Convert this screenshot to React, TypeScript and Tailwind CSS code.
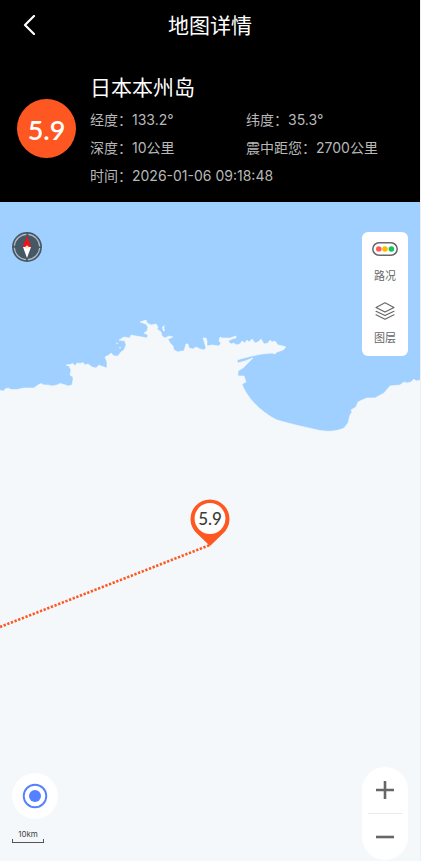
import { useState } from 'react';

const quake = {
  magnitude: '5.9',
  place: '日本本州岛',
  details: [
    { label: '经度', value: '133.2°' },
    { label: '纬度', value: '35.3°' },
    { label: '深度', value: '10公里' },
    { label: '震中距您', value: '2700公里' },
    { label: '时间', value: '2026-01-06 09:18:48', wide: true },
  ],
};

const coastline =
  'M0 390.5 4 391 5 389 8 388 11 389.5 17 389.5 24 388 34 388 38 385 41 383.5 44 385 48 385 52 386 57 385 60 383.5 64 384.5 68 386 72 385 73 380 73 377 70 375 71 370 69 366 66 365 70 364.5 73 363.5 75 366 77 363 80 363.5 83 362.5 85 365 88 364 92 367 96 368 99 365 101 366 104 367 107 368 107 362 105 357 109 355 111 353 114 356 118 356 121 352 124 350 126 345 125 341 119 340 124 337 130 338 131 335 136 336 142 337 147 338 148 335 144 333 147 331 148 327 146 324 140 322 146 320 ' +
  '147 323 151 325 156 324 158 327 157 329 161 332 162 336 165 338 169 336 173 337 168 339 170 343 173 346 174 350 178 352 181 351 184 351 186 344 188 344 189 348 193 349 196 347 200 349 204 350 206 348 204 341 203 338 206 338 207 341 207 346 212 345 219 346 221 343 219 341 220 337 222 338 224 338 230 338 236 336 236 338 232 339 228 341 231 344 234 343 236 345 240 344 242 341 245 343 247 340 249 342 252 339 255 343 258 342 261 339 264 344 268 343 270 340 272 342 275 341 278 345 283 346 286 347 283 350 277 352 275 354 272 353 262 354 252 356 242 358.5 237 360 238 363 245 361 253 358 248 363 243 368 238 371 238 376 244 376 246 382 242 384 ' +
  'C246 396 260 412 277 420C290 424 305 427 320 430.5C330 432 338 431 344 428 ' +
  'L348 423 350 415 352 412 351 410 356 407 358 402 362 400 367 398 375 398 384 393 390 386 400 385 404 382 407 383 411 382 414 379 416 381 421 380 V1400 H0Z';

function MapCanvas() {
  return (
    <svg
      className="absolute inset-0 h-full w-full"
      viewBox="0 202 420 659"
      preserveAspectRatio="xMidYMin slice"
      role="img"
      aria-label="震中地图"
    >
      <rect x="0" y="202" width="421" height="659" fill="#9fd0ff" />
      <path d={coastline} fill="#f4f8fb" stroke="#f4f8fb" strokeWidth="0.6" strokeLinejoin="round" />
      <path d="M162 327l3-2-1 3 1 3-2 0zM116 343l2-.5-1 2zM119 347l2 0-1 2z" fill="#f4f8fb" />
      {/* line to the user's position */}
      <line x1="0" y1="627" x2="210" y2="545" stroke="#ff5722" strokeWidth="2.6" strokeDasharray="2.3 1.6" />
      {/* epicenter pin */}
      <path d="M210 546 197 533.5a19.5 19.5 0 1 1 26 0z" fill="#ff5722" />
      <circle cx="210" cy="518.5" r="15.4" fill="#fff" />
      <text
        x="210"
        y="525"
        textAnchor="middle"
        className="fill-[#3c3c3c] font-['Lato',sans-serif] text-[17px] font-medium"
      >
        {quake.magnitude}
      </text>
    </svg>
  );
}

function CompassIcon() {
  return (
    <svg width="30" height="30" viewBox="0 0 30 30" aria-hidden="true">
      <circle cx="15" cy="15" r="15" fill="#465766" />
      <circle cx="15" cy="15" r="12.7" fill="none" stroke="#b4bdc5" strokeWidth="1.2" strokeDasharray="17.95 2" strokeDashoffset="-1" />
      <path d="M15 4 19.2 15H10.8z" fill="#f01414" />
      <path d="M11 15h8l-4 11z" fill="#fff" />
      <circle cx="15" cy="15" r="1.6" fill="#f3dede" />
    </svg>
  );
}

function TrafficIcon() {
  return (
    <svg width="26" height="14" viewBox="0 0 26 14" aria-hidden="true">
      <rect x="0.8" y="0.8" width="24.4" height="12.4" rx="6.2" fill="#fff" stroke="#666" strokeWidth="1.5" />
      <circle cx="6.8" cy="7" r="2.8" fill="#ff5a5a" />
      <circle cx="13" cy="7" r="2.8" fill="#ffbb00" />
      <circle cx="19.4" cy="7" r="2.8" fill="#14c45c" />
    </svg>
  );
}

function LayersIcon() {
  return (
    <svg width="20" height="18" viewBox="0 0 20 18" fill="none" stroke="#666" strokeWidth="1.1" strokeLinejoin="round" strokeLinecap="round" aria-hidden="true">
      <path d="M10 .8 19 5.4 10 10 1 5.4z" />
      <path d="M1 9.2 10 13.6 19 9.2" />
      <path d="M1 12.8 10 17.2 19 12.8" />
    </svg>
  );
}

export default function App() {
  const [traffic, setTraffic] = useState(false);

  return (
    <div className="flex min-h-screen flex-col bg-[#f0f0f0] pr-px font-['Inter','Noto_Sans_CJK_SC',sans-serif]">
      <header className="bg-black pb-3 text-white">
        <div className="grid h-[50px] grid-cols-[60px_1fr_60px] items-center">
          <button type="button" aria-label="返回" className="flex h-12 items-center pl-[23px]">
            <svg width="13" height="20" viewBox="0 0 13 20" fill="none" stroke="#fff" strokeWidth="2.2" strokeLinecap="round" strokeLinejoin="round" aria-hidden="true">
              <path d="M11 1 2 10 11 19" />
            </svg>
          </button>
          <h1 className="pt-0.5 text-center text-[21px] leading-7">地图详情</h1>
        </div>

        <section className="flex items-start gap-[14px] pt-6 pl-[17px]">
          <div className="mt-[25px] flex h-[59px] w-[59px] shrink-0 items-center justify-center rounded-full bg-[#ff5722] pt-0.5 font-['Lato',sans-serif] text-[27px] leading-8 font-semibold">
            {quake.magnitude}
          </div>
          <div className="flex-1">
            <h2 className="mb-1 text-[21px] leading-7">{quake.place}</h2>
            <dl className="grid grid-cols-[156px_1fr] text-sm leading-7 text-[#b8b8b8]">
              {quake.details.map(item => (
                <div key={item.label} className={item.wide ? 'col-span-2 flex' : 'flex'}>
                  <dt>{item.label}：</dt>
                  <dd>{item.value}</dd>
                </div>
              ))}
            </dl>
          </div>
        </section>
      </header>

      <main className="relative min-h-[480px] flex-1 overflow-hidden">
        <MapCanvas />

        <button type="button" aria-label="指北针" className="absolute top-[30px] left-3">
          <CompassIcon />
        </button>

        <div className="absolute top-[30px] right-3 flex w-[46px] flex-col rounded-md bg-white text-[11px] leading-4 text-[#666]">
          <button
            type="button"
            aria-pressed={traffic}
            onClick={() => setTraffic(!traffic)}
            className="flex h-[62px] flex-col items-center justify-between pt-[10px] pb-[10px]"
          >
            <TrafficIcon />
            路况
          </button>
          <button type="button" className="flex h-[62px] flex-col items-center justify-between pt-2 pb-[10px]">
            <LayersIcon />
            图层
          </button>
        </div>

        <button
          type="button"
          aria-label="定位"
          className="absolute bottom-[42px] left-3 flex h-[46px] w-[46px] items-center justify-center rounded-full bg-white"
        >
          <svg width="26" height="26" viewBox="0 0 26 26" aria-hidden="true">
            <circle cx="13" cy="13" r="11.3" fill="none" stroke="#5580ff" strokeWidth="1.9" />
            <circle cx="13" cy="13" r="6" fill="#5580ff" />
          </svg>
        </button>

        <div className="absolute bottom-[18px] left-3 w-8 text-center text-[8px] leading-[9px] text-[#444]">
          10km
          <div className="h-1 border-x border-b border-[#555]" />
        </div>

        <div className="absolute right-3 bottom-px flex w-[46px] flex-col items-center rounded-full bg-white">
          <button type="button" aria-label="放大" className="flex h-[46px] w-full items-center justify-center">
            <svg width="18" height="18" viewBox="0 0 18 18" stroke="#666" strokeWidth="2.6" aria-hidden="true">
              <path d="M9 0v18M0 9h18" />
            </svg>
          </button>
          <div className="h-px w-[35px] bg-[#ececec]" />
          <button type="button" aria-label="缩小" className="flex h-[46px] w-full items-center justify-center">
            <svg width="18" height="18" viewBox="0 0 18 18" stroke="#666" strokeWidth="2.6" aria-hidden="true">
              <path d="M0 9h18" />
            </svg>
          </button>
        </div>
      </main>
    </div>
  );
}
